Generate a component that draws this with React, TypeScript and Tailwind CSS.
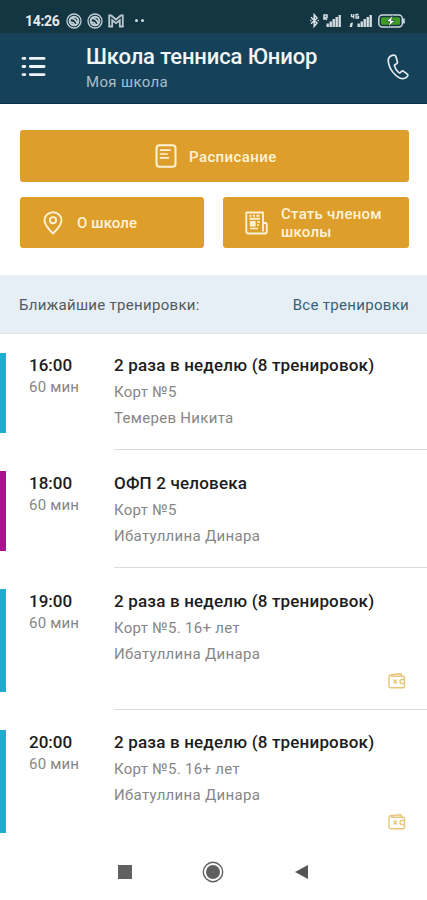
import clsx from 'clsx'

interface Training {
    time: string,
    duration: string,
    title: string,
    place: string,
    coach: string,
    color: string,
    paid?: boolean,
}

const trainings: Training[] = [
    { time: '16:00', duration: '60 мин', title: '2 раза в неделю (8 тренировок)', place: 'Корт №5', coach: 'Темерев Никита', color: 'bg-[#25a9cf]' },
    { time: '18:00', duration: '60 мин', title: 'ОФП 2 человека', place: 'Корт №5', coach: 'Ибатуллина Динара', color: 'bg-[#a5148c]' },
    { time: '19:00', duration: '60 мин', title: '2 раза в неделю (8 тренировок)', place: 'Корт №5. 16+ лет', coach: 'Ибатуллина Динара', color: 'bg-[#25a9cf]', paid: true },
    { time: '20:00', duration: '60 мин', title: '2 раза в неделю (8 тренировок)', place: 'Корт №5. 16+ лет', coach: 'Ибатуллина Динара', color: 'bg-[#25a9cf]', paid: true },
]

const AppBadge = () => (
    <svg width="16" height="16" viewBox="0 0 16 16" fill="none" stroke="#c3d0d7">
        <circle cx="8" cy="8" r="7" strokeWidth="1.300" />
        <circle cx="8" cy="8" r="4.300" strokeWidth="2" />
        <path d="M4.500 5.500c3-.8 5 .5 7 5M4.500 9.500c2-.5 3.500.5 4.500 2.500" strokeWidth="1.600" />
    </svg>
)

const MailIcon = () => (
    <svg width="16" height="14" viewBox="0 0 16 14" fill="none" stroke="#b9c8d0" strokeWidth="1.800">
        <path d="M1.200 1.500v11h3V6.200L8 9.200l3.800-3v6.300h3v-11h-2L8 5.500l-4.800-4z" />
    </svg>
)

const BluetoothIcon = () => (
    <svg width="9" height="15" viewBox="0 0 9 15" fill="none" stroke="#d8e1e6" strokeWidth="1.500">
        <path d="M1 4.300l6 5.700-2.800 3.300V1.700L7 5l-6 5.700" />
        <path d="M.2 7.500h1.200M7.600 7.500h1.200" />
    </svg>
)

const SignalIcon = ({ lte }: { lte?: boolean }) => (
    <svg width={lte ? 23 : 18} height="15" viewBox={lte ? '-5 0 23 15' : '0 0 18 15'} fill="#d3dde2">
        <rect x="3.500" y="10.500" width="2.400" height="3.500" />
        <rect x="6.500" y="8.500" width="2.400" height="5.500" />
        <rect x="9.500" y="6" width="2.400" height="8" />
        <rect x="12.500" y="4" width="2.400" height="10" />
        <rect x="15.500" y="2" width="2.400" height="12" />
        {lte ? (
            <>
                <path d="M-2.500 1v2.500h2.500M-.3 1v4.500M4.500 1.500H2v3.500h2.500V3.300H3.300" fill="none" stroke="#d3dde2" strokeWidth="1.300" />
                <path d="M-4.500 14l1-4 2.500-.5-1 4.500z" />
            </>
        ) : (
            <path d="M1 7V2h3v2.500H1.500L4 7" fill="none" stroke="#d3dde2" strokeWidth="1.500" />
        )}
    </svg>
)

const BatteryIcon = () => (
    <svg width="28" height="14" viewBox="0 0 28 14">
        <rect x=".8" y="1" width="23.500" height="12" rx="3.500" fill="#143542" stroke="#cbd6dc" strokeWidth="1.500" />
        <rect x="3" y="3.200" width="19" height="7.600" rx="1.500" fill="#3f9d27" />
        <path d="M14.500 1.500L8.500 7.500h3.300L10.500 12.500l6.500-6h-3.500z" fill="#fff" stroke="#143542" strokeWidth=".6" />
        <path d="M25.800 4.500v5" stroke="#cbd6dc" strokeWidth="2" />
    </svg>
)

const MenuIcon = () => (
    <svg width="25" height="21" viewBox="0 0 25 21" stroke="#eef4f7" strokeWidth="2.800" strokeLinecap="round">
        <path d="M2 2.400h1.800M9.300 2.400h13.800M2 10.500h1.800M9.300 10.500h13.800M2 18.600h1.800M9.300 18.600h13.800" />
    </svg>
)

const PhoneIcon = () => (
    <svg width="22" height="26" viewBox="0 0 22 26" fill="none" stroke="#e2ebef" strokeWidth="1.700" strokeLinejoin="round">
        <path d="M5.200 1.400C2.600 2.200 1 4.500 1.300 7.500c.5 4.800 3.200 9.800 7.200 13.500 3.400 3.100 6.500 4.300 9.200 3.300 1.500-.6 2.500-1.600 3-2.500.3-.7.100-1.200-.4-1.600l-3.700-2.900c-.7-.5-1.500-.4-2 .1l-1.100 1.100c-.5.5-1.100.5-1.700.1-2.300-1.900-3.700-4.300-4.300-6.700-.2-.7.100-1.200.7-1.500l1.400-.7c.7-.4 1-1 .8-1.800L9 2.800C8.300.9 6.500 1 5.200 1.400z" />
    </svg>
)

const ScheduleIcon = () => (
    <svg width="22" height="24" viewBox="0 0 22 24" fill="none" stroke="#fff3d6" strokeWidth="2" strokeLinecap="round">
        <rect x="1.500" y="1.200" width="19" height="21.500" rx="3" />
        <path d="M5.500 6.200h9.500M5.500 10h6.500M5.500 13.800h8" strokeWidth="1.700" />
    </svg>
)

const PinIcon = () => (
    <svg width="20" height="24" viewBox="0 0 20 24" fill="none" stroke="#fff3d6" strokeWidth="1.900" strokeLinejoin="round">
        <path d="M10 22.500C7 19.500 1.500 14.500 1.500 9.300a8.500 8 0 0 1 17 0c0 5.200-5.500 10.200-8.500 13.200z" />
        <circle cx="10" cy="9.200" r="3.100" />
    </svg>
)

const MemberIcon = () => (
    <svg width="23" height="24" viewBox="0 0 23 24" fill="none" stroke="#fff3d6" strokeWidth="1.800" strokeLinejoin="round">
        <path d="M18 22.500H3.500A2.200 2.200 0 0 1 1.300 20.300V1.500H18V20.500M18 12h2.300q1.500 0 1.500 1.500v7q0 2-1.900 2H18" />
        <path d="M4.500 4.800h2M8 4.800h2M11.500 4.800h3M4.500 7.800h10.500" strokeWidth="2" />
        <path d="M5.500 10.500h4.500v4.500H5.500z" fill="#fff3d6" strokeWidth="1.200" />
        <path d="M12 11h3M12 14h2M5 17.500h8" strokeWidth="1.400" />
    </svg>
)

const WalletIcon = () => (
    <svg width="18" height="16" viewBox="0 0 18 16" fill="none" stroke="#e6c67c" strokeWidth="1.400" strokeLinejoin="round">
        <path d="M3 3.200h12q1.500 0 1.500 1.500v8.600q0 1.500-1.500 1.500H3q-2 0-2-2V3.500Q1 2 2.600 1.700L12 .8q1.500 0 1.800 2.400" />
        <path d="M16.500 6.500h-2.500q-2 0-2 2t2 2h2.500M5.500 6.500l3.500 4M9 6.500l-3.500 4" />
    </svg>
)

const StatusBar = () => (
    <div className="h-[33px] bg-[#143542] pl-[25px] pr-[21px] pt-[8px] flex items-center justify-between">
        <div className="flex items-center">
            <span className="w-[41px] text-[14px] leading-[16px] font-bold text-[#e4ecf0] tracking-[-0.3px]">14:26</span>
            <div className="flex items-center gap-[5px]">
                <AppBadge />
                <AppBadge />
                <MailIcon />
            </div>
            <div className="ml-[11px] flex gap-[3px]">
                <span className="size-[3px] rounded-full bg-[#d3dde2]" />
                <span className="size-[3px] rounded-full bg-[#d3dde2]" />
            </div>
        </div>
        <div className="flex items-center">
            <BluetoothIcon />
            <div className="ml-[4px] mr-[6px] flex items-center gap-[8px]">
                <SignalIcon />
                <SignalIcon lte />
            </div>
            <BatteryIcon />
        </div>
    </div>
)

const Header = () => (
    <header className="h-[71px] bg-[#164259] border-b border-[#0e3348] pl-[21px] pr-[18px] flex">
        <div className="w-[65px] pt-[23px]"><MenuIcon /></div>
        <div className="flex-1 pt-[10px]">
            <h1 className="text-[22px] leading-[27px] font-medium text-[#f1f6f8] tracking-[-0.12px] whitespace-nowrap">Школа тенниса Юниор</h1>
            <p className="mt-[3px] text-[15px] leading-[18px] text-[#a9bfcc] tracking-[0.35px]">Моя школа</p>
        </div>
        <div className="pt-[21px]"><PhoneIcon /></div>
    </header>
)

const Actions = () => (
    <div className="pl-5 pr-[18px] pt-[26px] pb-[27px] text-[15px] leading-[18px] font-medium text-[#fff3d6] tracking-[0.4px]">
        <button className="w-full h-[52px] rounded-[3px] bg-[#de9e2c] flex items-center pl-[135px] gap-[12px]">
            <ScheduleIcon />
            <span className="pt-px">Расписание</span>
        </button>
        <div className="mt-[15px] flex gap-[19px]">
            <button className="w-[184px] h-[51px] rounded-[3px] bg-[#de9e2c] flex items-center pl-[23px] gap-[14px]">
                <PinIcon />
                <span className="pt-px tracking-[0.1px]">О школе</span>
            </button>
            <button className="flex-1 h-[51px] rounded-[3px] bg-[#de9e2c] flex items-center pl-[22px] gap-[13px] text-left">
                <MemberIcon />
                <span className="pt-px tracking-[0.25px]">Стать членом<br />школы</span>
            </button>
        </div>
    </div>
)

const TrainingRow = ({ training, last }: { training: Training, last: boolean }) => (
    <li>
        <div className={clsx('flex', training.paid ? 'h-[103px]' : 'h-[80px]')}>
            <div className={clsx('w-[6px] shrink-0', training.color)} />
            <div className="w-[108px] shrink-0 pl-[23px] pt-[2px]">
                <p className="text-[17px] leading-5 font-medium text-[#1c1c1c]">{training.time}</p>
                <p className="mt-[2px] text-[15px] leading-5 text-[#868686] tracking-[0.2px]">{training.duration}</p>
            </div>
            <div className="flex-1 pt-[2px] flex flex-col">
                <p className="text-[17px] leading-5 font-medium text-[#1c1c1c] tracking-[0.18px] whitespace-nowrap">{training.title}</p>
                <p className="mt-[7px] text-[15px] leading-5 text-[#868686] tracking-[0.3px]">{training.place}</p>
                <p className="mt-[6px] text-[15px] leading-5 text-[#868686] tracking-[0.3px]">{training.coach}</p>
                {training.paid && <div className="mt-[9px] pr-[21px] flex justify-end"><WalletIcon /></div>}
            </div>
        </div>
        {!last && <div className={clsx('ml-[114px] h-px bg-[#dcdcdc]', training.paid ? 'mt-[17px] mb-[20px]' : 'mt-[16px] mb-[21px]')} />}
    </li>
)

const NavBar = () => (
    <nav className="mt-[25px] px-[118px] h-[28px] flex items-center justify-between">
        <div className="size-[14px] bg-[#616161]" />
        <svg width="22" height="22" viewBox="0 0 22 22">
            <circle cx="11" cy="11" r="9.700" fill="none" stroke="#606060" strokeWidth="1.400" />
            <circle cx="11" cy="11" r="7" fill="#606060" />
        </svg>
        <svg width="15" height="16" viewBox="0 0 15 16">
            <path d="M1 8L14 1v14z" fill="#555" />
        </svg>
    </nav>
)

export default function App() {
    return (
        <main className="w-[427px] h-[900px] overflow-hidden bg-white font-['Roboto',sans-serif]">
            <StatusBar />
            <Header />
            <Actions />
            <div className="h-[59px] bg-[#e6eff6] border-b border-[#dde4ea] pl-[19px] pr-[18px] pt-[2px] flex items-center justify-between text-[15px]">
                <span className="text-[#55595d] tracking-[0.3px]">Ближайшие тренировки:</span>
                <span className="text-[#386174] tracking-[0.3px]">Все тренировки</span>
            </div>
            <ul className="pt-[19px]">
                {trainings.map((training, i) => (
                    <TrainingRow key={training.time} training={training} last={i === trainings.length - 1} />
                ))}
            </ul>
            <NavBar />
        </main>
    )
}
